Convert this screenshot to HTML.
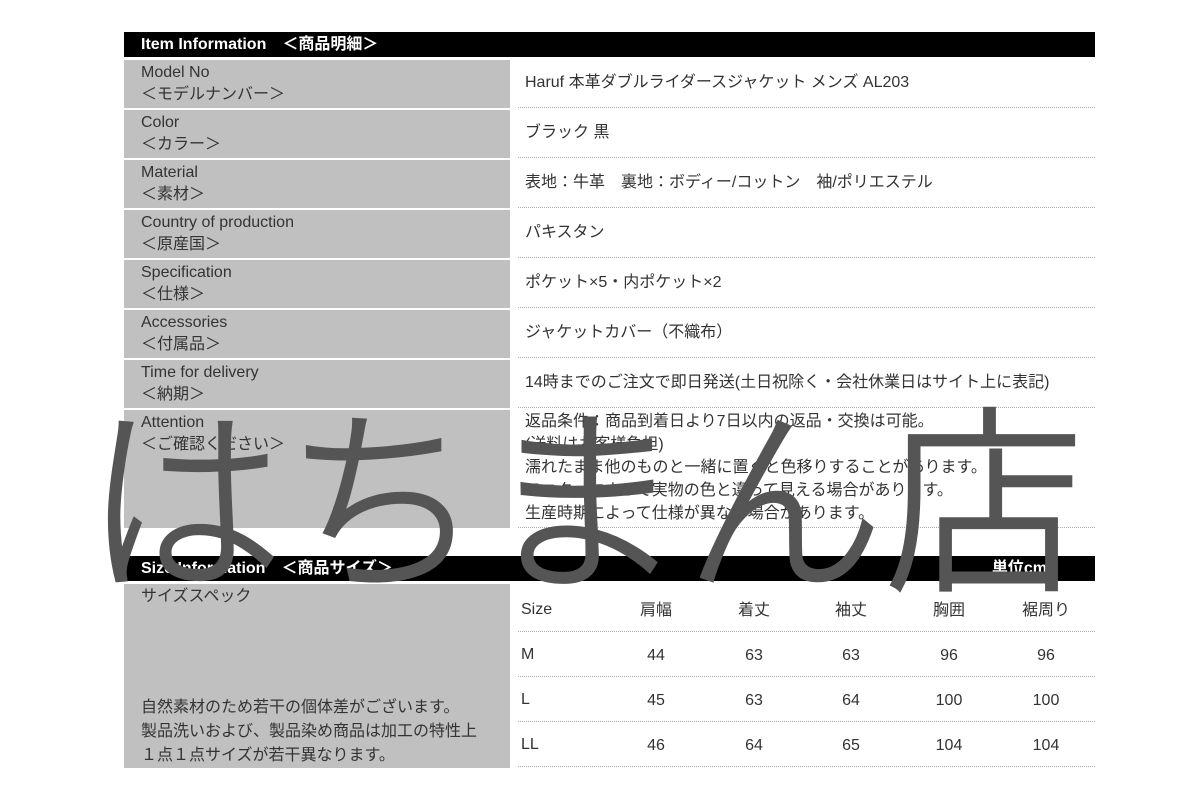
<!DOCTYPE html>
<html><head><meta charset="utf-8"><style>
body{margin:0;width:1200px;height:800px;background:#fff;position:relative;overflow:hidden;font-family:"Liberation Sans","Noto Sans CJK JP",sans-serif;color:#333;font-size:16px}
.a{position:absolute}
.bar{position:absolute;left:124px;width:971px;height:25px;background:#000;color:#fff;font-weight:bold;font-size:16px;line-height:25px;box-sizing:border-box}
.l{position:absolute;left:124px;width:386px;background:#c0c0c0;line-height:22px;padding:2px 0 0 17px;box-sizing:border-box}
.r{position:absolute;left:518px;width:577px;border-bottom:1px dotted #aaa;box-sizing:border-box;padding-left:7px}
.t{position:absolute;font-size:16px;line-height:20px;width:80px;text-align:center;margin-left:-40px}
.hl{position:absolute;left:518px;width:577px;border-bottom:1px dotted #aaa}
.wm{position:absolute;left:84px;top:388px;font-size:200px;color:#555;line-height:1;white-space:nowrap;font-family:"Noto Sans CJK JP",sans-serif;font-weight:300;letter-spacing:0px;-webkit-text-stroke:3px #555}
</style></head><body>
<div class="bar" style="top:32px;padding-left:17px">Item Information　＜商品明細＞</div>
<div class="l" style="top:60px;height:48px">Model No<br>＜モデルナンバー＞</div>
<div class="r" style="top:60px;height:48px;line-height:46px">Haruf 本革ダブルライダースジャケット メンズ AL203</div>
<div class="l" style="top:110px;height:48px">Color<br>＜カラー＞</div>
<div class="r" style="top:110px;height:48px;line-height:46px">ブラック 黒</div>
<div class="l" style="top:160px;height:48px">Material<br>＜素材＞</div>
<div class="r" style="top:160px;height:48px;line-height:46px">表地：牛革　裏地：ボディー/コットン　袖/ポリエステル</div>
<div class="l" style="top:210px;height:48px">Country of production<br>＜原産国＞</div>
<div class="r" style="top:210px;height:48px;line-height:46px">パキスタン</div>
<div class="l" style="top:260px;height:48px">Specification<br>＜仕様＞</div>
<div class="r" style="top:260px;height:48px;line-height:46px">ポケット×5・内ポケット×2</div>
<div class="l" style="top:310px;height:48px">Accessories<br>＜付属品＞</div>
<div class="r" style="top:310px;height:48px;line-height:46px">ジャケットカバー（不織布）</div>
<div class="l" style="top:360px;height:48px">Time for delivery<br>＜納期＞</div>
<div class="r" style="top:360px;height:48px;line-height:46px">14時までのご注文で即日発送(土日祝除く・会社休業日はサイト上に表記)</div>
<div class="l" style="top:410px;height:118px">Attention<br>＜ご確認ください＞</div>
<div class="r" style="top:410px;height:118px;line-height:23px;padding-top:0">返品条件：商品到着日より7日以内の返品・交換は可能。<br>(送料はお客様負担)<br>濡れたまま他のものと一緒に置くと色移りすることがあります。<br>モニターによって実物の色と違って見える場合があります。<br>生産時期によって仕様が異なる場合があります。</div>
<div class="bar" style="top:556px;padding-left:17px">Size Information　＜商品サイズ＞<span style="position:absolute;right:48px">単位cm</span></div>
<div class="l" style="top:584px;height:184px">サイズスペック<div style="position:absolute;left:17px;top:112px;line-height:24px">自然素材のため若干の個体差がございます。<br>製品洗いおよび、製品染め商品は加工の特性上<br>１点１点サイズが若干異なります。</div></div>
<div class="hl" style="top:631px"></div><div class="hl" style="top:676px"></div><div class="hl" style="top:721px"></div><div class="hl" style="top:766px"></div>
<div class="a" style="left:521px;top:601px">Size</div><div class="a" style="left:521px;top:646px">M</div><div class="a" style="left:521px;top:691px">L</div><div class="a" style="left:521px;top:736px">LL</div>
<div class="t" style="left:656px;top:601px">肩幅</div><div class="t" style="left:754px;top:601px">着丈</div><div class="t" style="left:851px;top:601px">袖丈</div><div class="t" style="left:949px;top:601px">胸囲</div><div class="t" style="left:1046px;top:601px">裾周り</div>
<div class="t" style="left:656px;top:646px">44</div><div class="t" style="left:754px;top:646px">63</div><div class="t" style="left:851px;top:646px">63</div><div class="t" style="left:949px;top:646px">96</div><div class="t" style="left:1046px;top:646px">96</div>
<div class="t" style="left:656px;top:691px">45</div><div class="t" style="left:754px;top:691px">63</div><div class="t" style="left:851px;top:691px">64</div><div class="t" style="left:949px;top:691px">100</div><div class="t" style="left:1046px;top:691px">100</div>
<div class="t" style="left:656px;top:736px">46</div><div class="t" style="left:754px;top:736px">64</div><div class="t" style="left:851px;top:736px">65</div><div class="t" style="left:949px;top:736px">104</div><div class="t" style="left:1046px;top:736px">104</div>
<div class="wm">はちまん店</div>
</body></html>
